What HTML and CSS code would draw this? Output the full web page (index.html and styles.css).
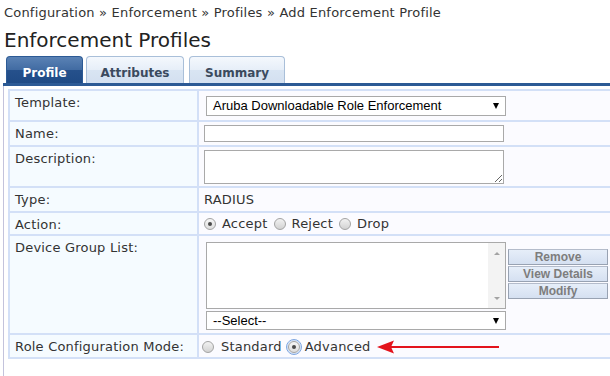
FILE: index.html
```html
<!DOCTYPE html>
<html lang="en">
<head>
    <meta charset="UTF-8">
    <title>Enforcement Profiles</title>
    <link rel="stylesheet" href="styles.css">
</head>
<body>
    <div class="crumbs">Configuration &raquo; Enforcement &raquo; Profiles &raquo; Add Enforcement Profile</div>
    <h1 class="title">Enforcement Profiles</h1>

    <div class="tabs">
        <a class="tab tab-profile active">Profile</a>
        <a class="tab tab-attributes">Attributes</a>
        <a class="tab tab-summary">Summary</a>
    </div>

    <div class="panel">
        <table class="form">
            <tr class="row-template">
                <td class="label">Template:</td>
                <td class="value">
                    <div class="select select-template">
                        <span>Aruba Downloadable Role Enforcement</span>
                        <i class="caret"></i>
                    </div>
                </td>
            </tr>
            <tr class="row-name">
                <td class="label">Name:</td>
                <td class="value"><input type="text" class="field"></td>
            </tr>
            <tr class="row-desc">
                <td class="label">Description:</td>
                <td class="value"><textarea class="area"></textarea></td>
            </tr>
            <tr class="row-type">
                <td class="label">Type:</td>
                <td class="value"><div class="text">RADIUS</div></td>
            </tr>
            <tr class="row-action">
                <td class="label">Action:</td>
                <td class="value">
                    <div class="radios">
                        <span class="radio checked"></span><span class="opt">Accept</span>
                        <span class="radio"></span><span class="opt">Reject</span>
                        <span class="radio"></span><span class="opt">Drop</span>
                    </div>
                </td>
            </tr>
            <tr class="row-device">
                <td class="label">Device Group List:</td>
                <td class="value">
                    <div class="group">
                        <div class="listbox">
                            <div class="list-body"></div>
                            <div class="scroll">
                                <i class="up"></i>
                                <i class="down"></i>
                            </div>
                        </div>
                        <div class="btns">
                            <button class="btn">Remove</button>
                            <button class="btn">View Details</button>
                            <button class="btn">Modify</button>
                        </div>
                    </div>
                    <div class="select select-group">
                        <span>--Select--</span>
                        <i class="caret"></i>
                    </div>
                </td>
            </tr>
            <tr class="row-role">
                <td class="label">Role Configuration Mode:</td>
                <td class="value">
                    <div class="radios role">
                        <span class="radio"></span><span class="opt opt-std">Standard</span>
                        <span class="radio checked focus"></span><span class="opt opt-adv">Advanced</span>
                        <svg class="pointer" width="124" height="14" viewBox="0 0 124 14">
                            <line x1="14" y1="7" x2="122" y2="7" stroke="#e3131c" stroke-width="2"/>
                            <polygon points="0,7 17,0.5 14,7 17,13.5" fill="#e3131c"/>
                        </svg>
                    </div>
                </td>
            </tr>
        </table>
    </div>
</body>
</html>
```

FILE: styles.css
```css
html, body {
    margin: 0;
    padding: 0;
    background: #fff;
    overflow: hidden;
}
body {
    font-family: "DejaVu Sans", Verdana, sans-serif;
    font-size: 13px;
    letter-spacing: 0.2px;
    color: #333;
    padding-left: 3px;
    height: 376px;
    display: flex;
    flex-direction: column;
}
.crumbs {
    padding: 5px 0 0 1px;
    line-height: 15px;
    color: #333;
}
.title {
    margin: 9px 0 0 1px;
    font-size: 20px;
    line-height: 22px;
    letter-spacing: 0;
    font-weight: normal;
    color: #222;
}

/* tabs */
.tabs {
    display: flex;
    margin-top: 5px;
    padding-left: 3px;
    border-bottom: 3px solid #2c5a95;
}
.tab {
    box-sizing: border-box;
    height: 27px;
    padding-top: 8px;
    line-height: 16px;
    text-align: center;
    font-size: 12px;
    font-weight: bold;
    letter-spacing: 0;
    color: #3b4a5e;
    border: 1px solid #a9bfd9;
    border-bottom: none;
    border-radius: 4px 4px 0 0;
    background: linear-gradient(#f4f8fd, #e6eef8 50%, #d9e5f3 51%, #d3e0f0);
}
.tab.active {
    color: #fff;
    border-color: #2c5a95;
    background: linear-gradient(#5a82b5, #416ba2 50%, #26518c 51%, #1f4a85);
}
.tab-profile { width: 77px; margin-right: 3px; }
.tab-attributes { width: 98px; margin-right: 5px; }
.tab-summary { width: 96px; }

/* panel */
.panel {
    flex: 1;
    border-left: 1px solid #c3c3dc;
    padding: 3px 0 0 4px;
}
.form {
    width: 620px;
    border-collapse: separate;
    border-spacing: 0;
    border: 1px solid #d3e0f7;
    border-right: none;
}
.form td {
    border: 1px solid #d3e0f7;
    vertical-align: top;
    padding: 0 5px;
    line-height: 16px;
}
.form td.label {
    width: 177px;
    padding-top: 4px;
    background: #f5fbff;
}
.form td.value {
    background: #fbfbff;
}
.row-template { height: 31px; }
.row-name { height: 25px; }
.row-desc { height: 41px; }
.row-type { height: 25px; }
.row-action { height: 23px; }
.row-device { height: 99px; }
.row-role { height: 24px; }

/* controls */
.select {
    box-sizing: border-box;
    width: 300px;
    height: 20px;
    margin-left: 2px;
    padding: 0 6px 0 6px;
    display: flex;
    align-items: center;
    justify-content: space-between;
    border: 1px solid #a9a9a9;
    background: #fff;
    font-family: "Liberation Sans", Arial, sans-serif;
    font-size: 13px;
    letter-spacing: 0;
    color: #000;
}
.select-template { margin-top: 5px; }
.select-group { margin-top: 2px; height: 19px; }
.caret {
    width: 0;
    height: 0;
    border-left: 3.5px solid transparent;
    border-right: 3.5px solid transparent;
    border-top: 6px solid #000;
}
.field {
    box-sizing: border-box;
    display: block;
    width: 300px;
    height: 17px;
    margin: 3px 0 0;
    padding: 0 3px;
    border: 1px solid #a9a9a9;
    background: #fff;
}
.area {
    box-sizing: border-box;
    display: block;
    width: 300px;
    height: 34px;
    margin: 3px 0 0;
    border: 1px solid #a9a9a9;
    background: #fff;
    resize: vertical;
}
.text {
    padding-top: 4px;
}

/* radios */
.radios {
    display: flex;
    align-items: center;
    height: 16px;
    padding-top: 3px;
}
.radios.role {
    padding-top: 4px;
    margin-left: -2px;
}
.radio {
    box-sizing: border-box;
    flex: none;
    width: 12px;
    height: 12px;
    border-radius: 50%;
    border: 1px solid #a3a3a3;
    background: linear-gradient(#f2f2f2, #d2d2d2);
    display: flex;
    align-items: center;
    justify-content: center;
}
.radio.checked {
    background: linear-gradient(#f6f6f6, #dedede);
}
.radio.checked::after {
    content: "";
    width: 4px;
    height: 4px;
    border-radius: 50%;
    background: #4a4a4a;
}
.radio.focus {
    outline: 1px solid #7ea6e0;
    outline-offset: 1px;
    box-shadow: 0 0 0 1px #cfe0f7;
}
.opt {
    margin: 0 6px 0 6px;
}
.opt-std {
    margin: 0 6px 0 7px;
}
.opt-adv {
    margin: 0 0 0 5px;
}
.pointer {
    margin-left: 6px;
}

/* device group */
.group {
    display: flex;
    margin-top: 6px;
}
.listbox {
    box-sizing: border-box;
    width: 300px;
    height: 67px;
    margin-left: 2px;
    border: 1px solid #a9a9a9;
    background: #fff;
    display: flex;
}
.list-body {
    flex: 1;
}
.scroll {
    width: 17px;
    background: #f3f3f3;
    display: flex;
    flex-direction: column;
    justify-content: space-between;
    align-items: center;
    padding: 9px 0 8px;
}
.scroll .up, .scroll .down {
    width: 0;
    height: 0;
    border-left: 3px solid transparent;
    border-right: 3px solid transparent;
}
.scroll .up { border-bottom: 3px solid #a3a3a3; }
.scroll .down { border-top: 3px solid #a3a3a3; }
.btns {
    display: flex;
    flex-direction: column;
    gap: 1px;
    margin: 7px 0 0 2px;
}
.btn {
    box-sizing: border-box;
    width: 100px;
    height: 16px;
    padding: 0;
    border: 1px solid #98a2b2;
    border-top-color: #b4bccb;
    background: linear-gradient(#e6eef9, #d5e0f1);
    font-family: "Liberation Sans", Arial, sans-serif;
    font-size: 12px;
    font-weight: bold;
    letter-spacing: 0;
    line-height: 14px;
    color: #7d7d7d;
}
```
